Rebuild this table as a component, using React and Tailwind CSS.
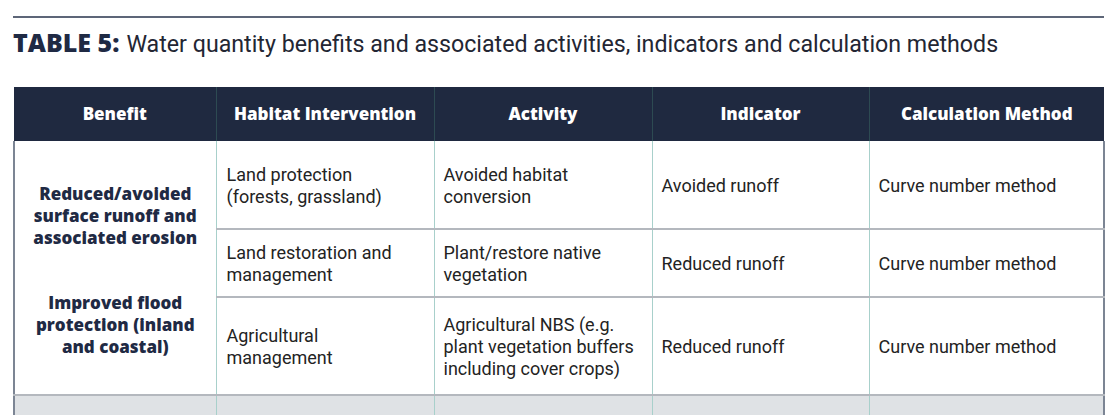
import React from "react";

const rows = [
  {
    intervention: ["Land protection", "(forests, grassland)"],
    activity: ["Avoided habitat", "conversion"],
    indicator: "Avoided runoff",
    method: "Curve number method",
    h: "h-[88px]",
  },
  {
    intervention: ["Land restoration and", "management"],
    activity: ["Plant/restore native", "vegetation"],
    indicator: "Reduced runoff",
    method: "Curve number method",
    h: "h-[68px]",
  },
  {
    intervention: ["Agricultural", "management"],
    activity: ["Agricultural NBS (e.g.", "plant vegetation buffers", "including cover crops)"],
    indicator: "Reduced runoff",
    method: "Curve number method",
    h: "h-[98px]",
  },
];

const headers = ["Benefit", "Habitat Intervention", "Activity", "Indicator", "Calculation Method"];

function Lines({ items }) {
  return items.map((t, i) => (
    <span key={i} className="block">
      {t}
    </span>
  ));
}

export default function App() {
  return (
    <div className="h-[415px] w-[1120px] overflow-hidden bg-white px-[13px] pt-[16px] font-['Roboto',sans-serif] text-[#232323]">
      {/* rule + title */}
      <div className="h-[2px] w-[1091px] bg-[#5d6678]" />
      <h2 className="mt-[9px] flex h-[30px] items-baseline text-[23.2px] leading-[30px] text-[#232633]">
        <span className="font-['Open_Sans',sans-serif] text-[25px] font-extrabold text-[#1f2a44]">TABLE 5:</span>
        <span className="ml-[7px]">
          Water quantity benefits and associated activities, indicators and calculation methods
        </span>
      </h2>

      <table className="mt-[30px] w-[1090px] table-fixed border-collapse text-[18px] leading-[22px]">
        <colgroup>
          <col className="w-[202px]" />
          <col className="w-[218px]" />
          <col className="w-[218px]" />
          <col className="w-[217px]" />
          <col className="w-[235px]" />
        </colgroup>
        <thead>
          <tr className="h-[54px] bg-[#1f2940]">
            {headers.map((h, i) => (
              <th
                key={h}
                className={
                  "text-center font-['Open_Sans',sans-serif] text-[17px] font-extrabold text-white " +
                  (i > 0 ? "border-l border-[#2d4a52]" : "")
                }
              >
                {h}
              </th>
            ))}
          </tr>
        </thead>
        <tbody className="border-x-2 border-[#7c8594]">
          {rows.map((r, i) => (
            <tr key={i} className={r.h + " border-b-2 border-[#b4b8be]"}>
              {i === 0 && (
                <td
                  rowSpan={3}
                  className="px-1 text-center align-middle font-['Open_Sans',sans-serif] text-[17px] font-extrabold text-[#1f2a44]"
                >
                  <p className="pt-[5px] pb-[43px]">
                    Reduced/avoided
                    <br />
                    surface runoff and
                    <br />
                    associated erosion
                  </p>
                  <p>
                    Improved flood
                    <br />
                    protection (inland
                    <br />
                    and coastal)
                  </p>
                </td>
              )}
              <td className="border-l border-[#a8d0cb] pt-[2px] pl-[10px] align-middle">
                <Lines items={r.intervention} />
              </td>
              <td className="border-l border-[#a8d0cb] pt-[2px] pl-[9px] align-middle">
                <Lines items={r.activity} />
              </td>
              <td className="border-l border-[#a8d0cb] pt-[2px] pl-[9px] align-middle">{r.indicator}</td>
              <td className="border-l border-[#a8d0cb] pt-[2px] pl-[9px] align-middle">{r.method}</td>
            </tr>
          ))}
          <tr className="h-[30px] bg-[#dfe2e5]">
            <td />
            <td className="border-l border-[#a8d0cb]" />
            <td className="border-l border-[#a8d0cb]" />
            <td className="border-l border-[#a8d0cb]" />
            <td className="border-l border-[#a8d0cb]" />
          </tr>
        </tbody>
      </table>
    </div>
  );
}
